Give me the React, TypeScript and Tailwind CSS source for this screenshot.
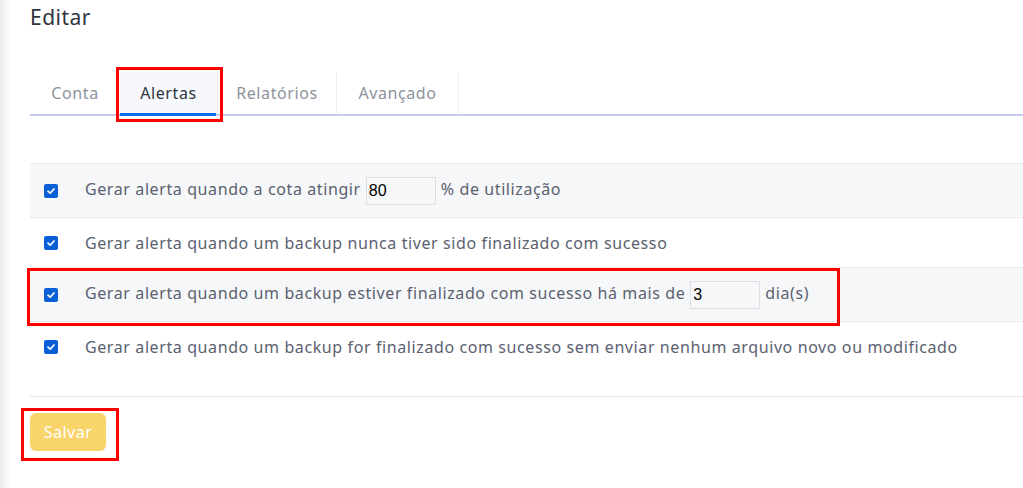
import React from "react";

function Check() {
  return (
    <span className="flex h-[14px] w-[14px] items-center justify-center rounded-[2px] bg-[#0b5fd6]">
      <svg width="10" height="10" viewBox="0 0 10 10">
        <path d="M2 5.2 L4.2 7.2 L8 3" fill="none" stroke="#fff" strokeWidth="1.7" strokeLinecap="round" strokeLinejoin="round" />
      </svg>
    </span>
  );
}

function Inp({ v }: { v: string }) {
  return (
    <span className="mx-[5px] inline-flex h-[28px] w-[70px] items-center border border-[#dcdee2] bg-[#f6f7f9] pl-[2px] align-middle text-[16px] tracking-normal text-black [font-family:'Liberation_Sans',Arial,sans-serif]">
      {v}
    </span>
  );
}

function Row({ bg, h, children }: { bg: boolean; h: string; children: React.ReactNode }) {
  return (
    <div className={`flex items-center border-b border-[#e8eaed] ${bg ? "bg-[#f6f7f9]" : "bg-white"} ${h}`}>
      <div className="flex w-[55px] justify-start pl-[14px]">
        <Check />
      </div>
      <div className="whitespace-nowrap">{children}</div>
    </div>
  );
}

export default function App() {
  return (
    <div className="relative flex h-[488px] w-[1023px] overflow-hidden bg-white text-[16px] tracking-[0.6px] text-[#5b6170] [font-family:'Noto_Sans',sans-serif]">
      <div className="w-[12px] shrink-0 bg-gradient-to-r from-[#ebebeb] to-white" />
      <div className="flex-1 pl-[18px]">
        <h1 className="pt-[3px] text-[21px] leading-[28px] tracking-[0.5px] text-[#2f3540]">Editar</h1>
        <div className="mt-[41px] flex h-[44px] border-b-2 border-[#c9ccf2]">
          <div className="flex w-[90px] items-center justify-center text-[#8d929c]">Conta</div>
          <div className="relative flex w-[97px] items-center justify-center bg-[#f7f8fc] text-[#2f3540]">
            Alertas
            <div className="absolute bottom-[-2px] left-0 right-[1px] h-[3px] bg-[#0d6ee8]" />
          </div>
          <div className="flex w-[119px] items-center justify-center border-l border-[#eff0f2] text-[#8d929c]">Relatórios</div>
          <div className="flex w-[123px] items-center justify-center border-x border-[#eff0f2] text-[#8d929c]">Avançado</div>
        </div>
        <div className="mt-[47px] border-t border-[#e8eaed]">
          <Row bg h="h-[54px]">
            Gerar alerta quando a cota atingir<Inp v="80" />% de utilização
          </Row>
          <Row bg={false} h="h-[50px]">
            Gerar alerta quando um backup nunca tiver sido finalizado com sucesso
          </Row>
          <Row bg h="h-[54px]">
            Gerar alerta quando um backup estiver finalizado com sucesso há mais de<Inp v="3" />dia(s)
          </Row>
          <div className="flex h-[74px] items-start bg-white pt-[13px]">
            <div className="flex w-[55px] justify-start pl-[14px] pt-[5px]">
              <Check />
            </div>
            <div className="whitespace-nowrap">Gerar alerta quando um backup for finalizado com sucesso sem enviar nenhum arquivo novo ou modificado</div>
          </div>
        </div>
        <div className="border-t border-[#e2e4e7]" />
        <button className="mt-[16px] h-[38px] w-[76px] rounded-[6px] bg-[#f9d46b] text-[16px] tracking-[0.5px] text-white">Salvar</button>
      </div>

      <div className="pointer-events-none absolute left-[116px] top-[67px] h-[55px] w-[107px] border-[3px] border-[#ff0000]" />
      <div className="pointer-events-none absolute left-[27px] top-[268px] h-[58px] w-[813px] border-[3px] border-[#ff0000]" />
      <div className="pointer-events-none absolute left-[21px] top-[408px] h-[53px] w-[98px] border-[3px] border-[#ff0000]" />
    </div>
  );
}
